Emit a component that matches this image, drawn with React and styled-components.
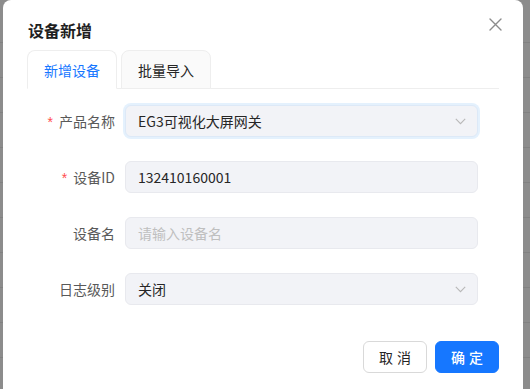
import React from "react";
import styled, { createGlobalStyle } from "styled-components";

const GlobalStyle = createGlobalStyle`
  html, body {
    margin: 0;
    padding: 0;
    background: #ffffff;
    overflow: hidden;
  }
  body {
    font-family: "Noto Sans CJK SC", "Noto Sans", sans-serif;
  }
`;

const fields = [
    { label: "产品名称", required: true, value: "EG3可视化大屏网关", select: true, focused: true },
    { label: "设备ID", required: true, value: "132410160001" },
    { label: "设备名", placeholder: "请输入设备名" },
    { label: "日志级别", value: "关闭", select: true },
];

function Chevron() {
    return (
        <svg width="11" height="7" viewBox="0 0 11 7">
            <polyline points="0.8,0.8 5.5,5.6 10.2,0.8" fill="none" stroke="#b8b8b8" strokeWidth="1.1" />
        </svg>
    );
}

function CloseIcon() {
    return (
        <svg width="13" height="13" viewBox="0 0 13 13">
            <path d="M1 1 L12 12 M12 1 L1 12" stroke="#8c8c8c" strokeWidth="1.4" strokeLinecap="round" />
        </svg>
    );
}

export default function App() {
    return (
        <Screen>
            <GlobalStyle />
            <PageBehind>
                {[0, 1, 2, 3, 4, 5, 6, 7, 8, 9].map((i) => (
                    <BgRow key={i} />
                ))}
            </PageBehind>
            <Mask />
            <Modal>
                <Header>
                    <Title>设备新增</Title>
                    <CloseButton>
                        <CloseIcon />
                    </CloseButton>
                </Header>

                <TabNav>
                    <Tab active>新增设备</Tab>
                    <Tab>批量导入</Tab>
                </TabNav>

                <Form>
                    {fields.map((f) => (
                        <FormRow key={f.label}>
                            <Label>
                                {f.required && <Star>*</Star>}
                                {f.label}
                            </Label>
                            <Field focused={f.focused}>
                                {f.value ? <Value>{f.value}</Value> : <Placeholder>{f.placeholder}</Placeholder>}
                                {f.select && <Chevron />}
                            </Field>
                        </FormRow>
                    ))}
                </Form>

                <Footer>
                    <Button>
                        <span>取</span>
                        <span>消</span>
                    </Button>
                    <Button primary>
                        <span>确</span>
                        <span>定</span>
                    </Button>
                </Footer>
            </Modal>
        </Screen>
    );
}

const Screen = styled.div`
    position: relative;
    width: 530px;
    height: 389px;
    overflow: hidden;
`;

const PageBehind = styled.div`
    display: flex;
    flex-direction: column;
    padding-top: 8px;
`;

const BgRow = styled.div`
    height: 34px;
    border-bottom: 1px solid #ececec;
`;

const Mask = styled.div`
    position: absolute;
    inset: 0;
    background: rgba(0, 0, 0, 0.45);
`;

const Modal = styled.div`
    position: absolute;
    left: 3px;
    top: 0;
    width: 520px;
    height: 420px;
    box-sizing: border-box;
    padding: 18px 24px 20px 24px;
    background: #ffffff;
    border-radius: 8px;
    display: flex;
    flex-direction: column;
`;

const Header = styled.div`
    display: flex;
    align-items: center;
    justify-content: space-between;
    height: 24px;
    padding-left: 1px;
`;

const Title = styled.div`
    font-size: 16px;
    font-weight: 600;
    color: #1f1f1f;
    line-height: 24px;
`;

const CloseButton = styled.div`
    display: flex;
    align-items: center;
    justify-content: center;
    width: 20px;
    height: 20px;
    margin-right: -6px;
    margin-top: -12px;
`;

const TabNav = styled.div`
    display: flex;
    gap: 4px;
    margin-top: 8px;
    border-bottom: 1px solid #eeeeee;
    height: 38px;
`;

const Tab = styled.div`
    box-sizing: border-box;
    height: 39px;
    padding: 0 16px;
    display: flex;
    align-items: center;
    font-size: 14px;
    color: ${(p) => (p.active ? "#1677ff" : "#262626")};
    background: ${(p) => (p.active ? "#ffffff" : "#fafafa")};
    border: 1px solid #eeeeee;
    border-bottom-color: ${(p) => (p.active ? "#ffffff" : "#eeeeee")};
    border-radius: 8px 8px 0 0;
`;

const Form = styled.div`
    display: flex;
    flex-direction: column;
    gap: 24px;
    margin-top: 16px;
`;

const FormRow = styled.div`
    display: grid;
    grid-template-columns: 88px 353px;
    column-gap: 10px;
    align-items: center;
`;

const Label = styled.div`
    text-align: right;
    font-size: 14px;
    color: #595959;
    white-space: nowrap;
`;

const Star = styled.span`
    color: #ff4d4f;
    margin-right: 6px;
    font-family: "Liberation Sans", sans-serif;
`;

const Field = styled.div`
    box-sizing: border-box;
    height: 32px;
    padding: 0 11px 0 12px;
    display: flex;
    align-items: center;
    justify-content: space-between;
    background: #f2f3f7;
    border: 1px solid ${(p) => (p.focused ? "#dde9f7" : "#e8e9ee")};
    border-radius: 6px;
    box-shadow: ${(p) => (p.focused ? "0 0 0 2px #e4f1fd" : "none")};
    font-size: 14px;
`;

const Value = styled.span`
    color: #262626;
`;

const Placeholder = styled.span`
    color: #bfbfbf;
`;

const Footer = styled.div`
    display: flex;
    justify-content: flex-end;
    gap: 8px;
    margin-top: 36px;
`;

const Button = styled.div`
    box-sizing: border-box;
    width: 64px;
    height: 32px;
    display: flex;
    align-items: center;
    justify-content: center;
    gap: 4px;
    font-size: 14px;
    border-radius: 6px;
    color: ${(p) => (p.primary ? "#ffffff" : "#262626")};
    background: ${(p) => (p.primary ? "#1677ff" : "#ffffff")};
    border: 1px solid ${(p) => (p.primary ? "#1677ff" : "#d9d9d9")};
    font-weight: ${(p) => (p.primary ? 500 : 400)};
`;
